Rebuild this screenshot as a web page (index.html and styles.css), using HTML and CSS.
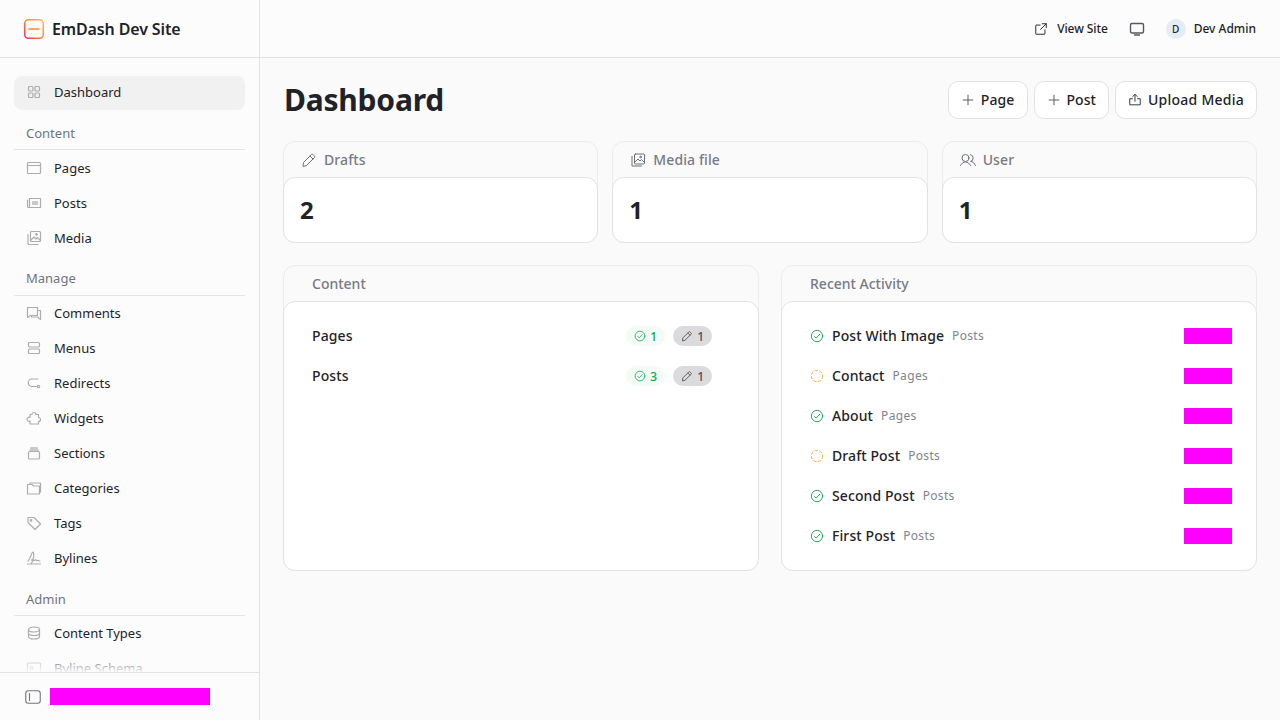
FILE: index.html
```html
<!DOCTYPE html>
<html lang="en">
<head>
<meta charset="utf-8">
<title>Dashboard</title>
<link rel="stylesheet" href="styles.css">
</head>
<body>
<svg class="defs" width="0" height="0" aria-hidden="true">
  <defs>
    <linearGradient id="logo-g" x1="1" y1="0" x2="0" y2="1">
      <stop offset="0" stop-color="#fdc04a"/>
      <stop offset=".5" stop-color="#fa8a38"/>
      <stop offset="1" stop-color="#ec2f5f"/>
    </linearGradient>
  </defs>
</svg>
<div class="app">
  <aside class="sidebar">
    <div class="brand">
      <svg class="logo" width="20" height="20" viewBox="0 0 20 20"><rect x=".75" y=".75" width="18.5" height="18.5" rx="3.5" fill="#fffaf5" stroke="url(#logo-g)" stroke-width="1.5"/><path d="M5 10h10" stroke="#f98a33" stroke-width="1.6"/></svg>
      <span class="brand-name">EmDash Dev Site</span>
    </div>
    <nav class="nav">
      <a class="nav-item active"><svg class="ni" viewBox="0 0 16 16"><rect x="2.500" y="2.500" width="4.500" height="4.500" rx="1"/><rect x="9" y="2.500" width="4.500" height="4.500" rx="1"/><rect x="2.500" y="9" width="4.500" height="4.500" rx="1"/><rect x="9" y="9" width="4.500" height="4.500" rx="1"/></svg><span>Dashboard</span></a>
      <div class="nav-label l-content">Content</div>
      <a class="nav-item"><svg class="ni" viewBox="0 0 16 16"><rect x="1.500" y="2.500" width="13" height="11" rx="1"/><path d="M1.500 5.500h13"/></svg><span>Pages</span></a>
      <a class="nav-item"><svg class="ni" viewBox="0 0 16 16"><path d="M3.500 3.500h11v9h-12a1 1 0 0 1-1-1v-6.500"/><rect class="fill" x="6" y="6" width="6" height="4"/><path d="M3.500 3.500v9"/></svg><span>Posts</span></a>
      <a class="nav-item"><svg class="ni" viewBox="0 0 16 16"><rect x="4.500" y="1.500" width="10" height="10" rx="1"/><path d="M2 4.500v9a1 1 0 0 0 1 1h9M5 10l3-3 2 2 1.500-1.500L14.500 10.500"/><circle cx="10.500" cy="4.500" r=".8"/></svg><span>Media</span></a>
      <div class="nav-label l-manage">Manage</div>
      <a class="nav-item"><svg class="ni" viewBox="0 0 16 16"><path d="M1.500 2.500h10v8h-7l-3 2zM11.500 5.500h3v9l-3-2.500h-6v-1.500"/></svg><span>Comments</span></a>
      <a class="nav-item"><svg class="ni" viewBox="0 0 16 16"><rect x="2.500" y="2.500" width="11" height="4.500" rx="1"/><rect x="2.500" y="9" width="11" height="4.500" rx="1"/></svg><span>Menus</span></a>
      <a class="nav-item"><svg class="ni" viewBox="0 0 16 16"><path d="M12 4H6a3.700 3.700 0 0 0 0 7.500h4.500"/><circle cx="12.500" cy="11.500" r="1.200"/></svg><span>Redirects</span></a>
      <a class="nav-item"><svg class="ni" viewBox="0 0 16 16"><path d="M4 14h8.500v-2.500a2 2 0 1 0 0-4V4.500H10a2 2 0 1 0-4 0H4v3a2 2 0 1 0 0 3.500z"/></svg><span>Widgets</span></a>
      <a class="nav-item"><svg class="ni" viewBox="0 0 16 16"><rect x="2.500" y="6.500" width="11" height="7.500" rx="1"/><path class="fill" d="M4.500 2h7l1.500 4H3z"/></svg><span>Sections</span></a>
      <a class="nav-item"><svg class="ni" viewBox="0 0 16 16"><path d="M1.500 4.500h4.500l1.500 1.500h6v8h-12zM4 4.500v-1.500h10.500v9h-1"/></svg><span>Categories</span></a>
      <a class="nav-item"><svg class="ni" viewBox="0 0 16 16"><path d="M2 2.500h6l6.500 6.500-5.500 5.500-7-7z"/><circle cx="5" cy="5.500" r=".8"/></svg><span>Tags</span></a>
      <a class="nav-item"><svg class="ni" viewBox="0 0 16 16"><path d="M1.500 14h13M2 11c2.500-2 3.500-9 5-9s.5 9-1.500 11M5.500 10c1.500-1.500 2 1 3 .5s1-1.500 1.500-.5.5 1 1.500.5 1.500.5 2.500.5"/></svg><span>Bylines</span></a>
      <div class="nav-label l-admin">Admin</div>
      <a class="nav-item"><svg class="ni" viewBox="0 0 16 16"><ellipse cx="8" cy="4.500" rx="5.500" ry="2.500"/><path d="M2.500 4.500v7c0 1.400 2.500 2.500 5.500 2.500s5.500-1.100 5.500-2.500v-7M2.500 8c0 1.400 2.500 2.500 5.500 2.500s5.500-1.100 5.500-2.500"/></svg><span>Content Types</span></a>
      <a class="nav-item"><svg class="ni" viewBox="0 0 16 16"><rect x="1.500" y="3" width="13" height="10" rx="1"/><circle cx="5.500" cy="8" r="1.500"/></svg><span>Byline Schema</span></a>
    </nav>
    <div class="side-foot">
      <svg class="collapse" width="16" height="16" viewBox="0 0 16 16"><rect x=".75" y="1.750" width="14.500" height="12.500" rx="2.500"/><path d="M4.500 4.500v7"/></svg>
      <div class="redact foot-redact"></div>
    </div>
  </aside>
  <div class="main">
    <header class="topbar">
      <a class="top-link"><svg class="ti" viewBox="0 0 16 16"><path d="M7 3.500H2.500a.5.500 0 0 0-.5.500v9.500a.5.500 0 0 0 .5.500H12a.5.500 0 0 0 .5-.5V9M9.500 2H14v4.500M14 2L7.500 8.500"/></svg><span class="view-site">View Site</span></a>
      <svg class="monitor" viewBox="0 0 16 16"><rect x="1.500" y="2.500" width="13" height="9.500" rx="1.500"/><path d="M5.500 14h5"/></svg>
      <div class="user"><span class="avatar">D</span><span>Dev Admin</span></div>
    </header>
    <main class="content">
      <div class="page-head">
        <h1>Dashboard</h1>
        <div class="actions">
          <button class="btn"><svg class="bi" viewBox="0 0 16 16"><path d="M2.500 8h11M8 2.500v11"/></svg>Page</button>
          <button class="btn btn-post"><svg class="bi" viewBox="0 0 16 16"><path d="M2.500 8h11M8 2.500v11"/></svg>Post</button>
          <button class="btn btn-wide"><svg class="bi up" viewBox="0 0 16 16"><path d="M5 6.500H2v7h12v-7h-3M8 9.500V1.500M5.500 4L8 1.500 10.500 4"/></svg>Upload Media</button>
        </div>
      </div>
      <section class="stats">
        <div class="card">
          <div class="card-head stat-head"><svg class="hi" viewBox="0 0 16 16"><path d="M2 14l.5-3.500L10.500 2.500a1 1 0 0 1 1.400 0l1.600 1.600a1 1 0 0 1 0 1.400L5.500 13.500zM9 4l3 3"/></svg>Drafts</div>
          <div class="card-body stat-val">2</div>
        </div>
        <div class="card">
          <div class="card-head stat-head"><svg class="hi" viewBox="0 0 16 16"><rect x="4.500" y="2" width="10" height="10" rx="1"/><path d="M2 4.500V14h9.500M5 10l3-3 2 2 1.500-1.500 3 3"/><circle cx="10.500" cy="5" r=".8"/></svg>Media file</div>
          <div class="card-body stat-val">1</div>
        </div>
        <div class="card">
          <div class="card-head stat-head"><svg class="hi" viewBox="0 0 16 16"><circle cx="5.500" cy="6" r="3.500"/><path d="M.5 13.500c1-2 2.800-3.500 5-3.500s4 1.500 5 3.500M10.500 2.600a3.500 3.500 0 0 1 0 6.800c2.200 0 4 1.900 5 4.100"/></svg>User</div>
          <div class="card-body stat-val">1</div>
        </div>
      </section>
      <section class="panels">
        <div class="card panel">
          <div class="card-head panel-head">Content</div>
          <div class="card-body panel-body">
            <div class="row">
              <span class="row-title">Pages</span>
              <span class="chips">
                <span class="chip green"><svg class="ci" viewBox="0 0 16 16"><circle cx="8" cy="8" r="6.500"/><path d="M5 8.500l2 2 4-4.500"/></svg>1</span>
                <span class="chip gray"><svg class="ci" viewBox="0 0 16 16"><path d="M2 14l.5-3.500L10.500 2.500a1 1 0 0 1 1.400 0l1.600 1.600a1 1 0 0 1 0 1.400L5.500 13.500zM9 4l3 3"/></svg>1</span>
              </span>
            </div>
            <div class="row">
              <span class="row-title">Posts</span>
              <span class="chips">
                <span class="chip green"><svg class="ci" viewBox="0 0 16 16"><circle cx="8" cy="8" r="6.500"/><path d="M5 8.500l2 2 4-4.500"/></svg>3</span>
                <span class="chip gray"><svg class="ci" viewBox="0 0 16 16"><path d="M2 14l.5-3.500L10.500 2.500a1 1 0 0 1 1.400 0l1.600 1.600a1 1 0 0 1 0 1.400L5.500 13.500zM9 4l3 3"/></svg>1</span>
              </span>
            </div>
          </div>
        </div>
        <div class="card panel">
          <div class="card-head panel-head">Recent Activity</div>
          <div class="card-body panel-body">
            <div class="row"><svg class="st ok" viewBox="0 0 16 16"><circle cx="8" cy="8" r="6.500"/><path d="M5 8.500l2 2 4-4.500"/></svg><span class="row-title">Post With Image</span><span class="kind">Posts</span><span class="redact when"></span></div>
            <div class="row"><svg class="st draft" viewBox="0 0 16 16"><circle cx="8" cy="8" r="6.500"/></svg><span class="row-title">Contact</span><span class="kind">Pages</span><span class="redact when"></span></div>
            <div class="row"><svg class="st ok" viewBox="0 0 16 16"><circle cx="8" cy="8" r="6.500"/><path d="M5 8.500l2 2 4-4.500"/></svg><span class="row-title">About</span><span class="kind">Pages</span><span class="redact when"></span></div>
            <div class="row"><svg class="st draft" viewBox="0 0 16 16"><circle cx="8" cy="8" r="6.500"/></svg><span class="row-title">Draft Post</span><span class="kind">Posts</span><span class="redact when"></span></div>
            <div class="row"><svg class="st ok" viewBox="0 0 16 16"><circle cx="8" cy="8" r="6.500"/><path d="M5 8.500l2 2 4-4.500"/></svg><span class="row-title">Second Post</span><span class="kind">Posts</span><span class="redact when"></span></div>
            <div class="row"><svg class="st ok" viewBox="0 0 16 16"><circle cx="8" cy="8" r="6.500"/><path d="M5 8.500l2 2 4-4.500"/></svg><span class="row-title">First Post</span><span class="kind">Posts</span><span class="redact when"></span></div>
          </div>
        </div>
      </section>
    </main>
  </div>
</div>
</body>
</html>
```
FILE: styles.css
```css
* { box-sizing: border-box; }
html, body { margin: 0; height: 100%; }
body {
  font-family: "Noto Sans", sans-serif;
  background: #fafafa;
  color: #1f2329;
  overflow: hidden;
}
.defs { position: absolute; }
svg { display: block; flex: none; fill: none; stroke-linecap: round; stroke-linejoin: round; }
.app { display: flex; height: 720px; }

.sidebar {
  width: 260px;
  flex: none;
  display: flex;
  flex-direction: column;
  border-right: 1px solid #e3e3e5;
  background: #fcfcfc;
}
.brand {
  height: 58px;
  flex: none;
  display: flex;
  align-items: center;
  gap: 8px;
  padding-left: 24px;
  border-bottom: 1px solid #e3e3e5;
}
.brand-name { font-size: 16px; font-weight: 600; line-height: 22px; letter-spacing: -.13px; }
.nav {
  position: relative;
  flex: 1;
  min-height: 0;
  overflow: hidden;
  padding: 18px 14px 0;
}
.nav::after {
  content: "";
  position: absolute;
  left: 0;
  right: 0;
  bottom: 0;
  height: 20px;
  background: linear-gradient(to bottom, rgba(252,252,252,0), rgba(252,252,252,.95));
}
.nav-item {
  height: 34px;
  margin-bottom: 1px;
  display: flex;
  align-items: center;
  gap: 12px;
  padding-left: 12px;
  border-radius: 8px;
  font-size: 13px;
  line-height: 18px;
  color: #1f2329;
}
.nav-item.active { background: #f1f1f1; padding-bottom: 2px; }
.ni { width: 16px; height: 16px; stroke: #adadb1; stroke-width: 1.200; }
.ni .fill { fill: #c9c9cc; stroke: none; }
.nav-label {
  height: 40px;
  padding: 13px 0 0 12px;
  border-bottom: 1px solid #e3e3e5;
  font-size: 13px;
  line-height: 18px;
  color: #6f7480;
}
.l-content { height: 39px; margin-bottom: 1px; }
.l-admin { padding-top: 14px; }
.side-foot {
  height: 48px;
  flex: none;
  display: flex;
  align-items: center;
  gap: 9px;
  padding-left: 25px;
  border-top: 1px solid #e3e3e5;
}
.collapse { stroke: #70747d; stroke-width: 1.100; }
.redact { background: #ff00ff; display: block; }
.foot-redact { width: 160px; height: 17px; }

.main { flex: 1; min-width: 0; display: flex; flex-direction: column; }
.topbar {
  height: 58px;
  flex: none;
  display: flex;
  align-items: center;
  justify-content: flex-end;
  padding-right: 24px;
  border-bottom: 1px solid #e3e3e5;
  background: #fcfcfc;
  font-size: 12px;
  font-weight: 500;
}
.top-link { display: flex; align-items: center; gap: 9px; }
.view-site { letter-spacing: -.1px; }
.ti { width: 14px; height: 14px; stroke: #23262b; stroke-width: 1.100; }
.monitor { width: 16px; height: 16px; margin-left: 21px; stroke: #55585e; stroke-width: 1.400; }
.user { display: flex; align-items: center; gap: 8px; margin-left: 21px; }
.avatar {
  width: 20px;
  height: 20px;
  border-radius: 50%;
  background: #e4ecf5;
  display: flex;
  align-items: center;
  justify-content: center;
  font-size: 10px;
}

.content { padding: 23px 23px 0; }
.page-head {
  display: flex;
  align-items: center;
  justify-content: space-between;
  height: 38px;
  margin-bottom: 22px;
}
h1 { margin: 0 0 0 1px; font-size: 30px; line-height: 38px; font-weight: 700; letter-spacing: -.22px; }
.actions { display: flex; gap: 6px; }
.btn {
  height: 38px;
  display: flex;
  align-items: center;
  gap: 6px;
  padding: 0 12px;
  border: 1px solid #e2e2e4;
  border-radius: 10px;
  background: #fff;
  font: inherit;
  font-size: 14px;
  font-weight: 500;
  line-height: 20px;
  letter-spacing: .12px;
  color: #1f2329;
}
.btn-post { letter-spacing: .05px; }
.btn-wide { letter-spacing: .25px; }
.bi { width: 14px; height: 14px; stroke: #55585e; stroke-width: 1.100; }
.bi.up { stroke: #33363b; }

.stats { display: grid; grid-template-columns: repeat(3, 1fr); gap: 14px; margin-bottom: 22px; }
.panels { display: grid; grid-template-columns: repeat(2, 1fr); gap: 22px; }
.card {
  display: flex;
  flex-direction: column;
  border: 1px solid #ececee;
  border-radius: 12px;
  background: #fafafa;
}
.card-head {
  height: 35px;
  display: flex;
  align-items: center;
  font-size: 14px;
  font-weight: 500;
  color: #777b85;
}
.stat-head { gap: 7px; padding-left: 17px; letter-spacing: .1px; }
.hi { width: 16px; height: 16px; stroke: #6d7078; stroke-width: 1; }
.card-body {
  margin: 0 -1px -1px;
  background: #fff;
  border: 1px solid #e3e3e5;
  border-radius: 12px;
}
.stat-val {
  height: 66px;
  padding: 0 0 2px 16px;
  display: flex;
  align-items: center;
  font-size: 24px;
  font-weight: 700;
}
.panel { height: 306px; }
.panel-head { padding-left: 28px; }
.panel-body { flex: 1; padding: 14px 24px 0 28px; }
.row { height: 40px; display: flex; align-items: center; }
.row-title { font-size: 14px; font-weight: 500; line-height: 20px; letter-spacing: .1px; }
.chips { margin-left: auto; margin-right: 22px; display: flex; gap: 8px; }
.chip {
  height: 20px;
  display: flex;
  align-items: center;
  gap: 4px;
  padding: 0 8px;
  border-radius: 10px;
  font-size: 12px;
  font-weight: 500;
}
.ci { width: 12px; height: 12px; stroke-width: 1.100; }
.chip.green { background: #f2fbf5; color: #16a34a; }
.chip.green .ci { stroke: #22a755; }
.chip.gray { background: #dbdbdd; color: #4b4b50; }
.chip.gray .ci { stroke: #4b4b50; }
.st { width: 14px; height: 14px; margin-right: 8px; stroke-width: 1.100; }
.st.ok { stroke: #22a755; }
.st.draft { stroke: #e8aa3a; stroke-dasharray: 3 2.500; }
.kind { margin: 0 0 1px 8px; font-size: 12px; letter-spacing: .33px; color: #80848d; }
.when { margin-left: auto; width: 48px; height: 16px; }
```
